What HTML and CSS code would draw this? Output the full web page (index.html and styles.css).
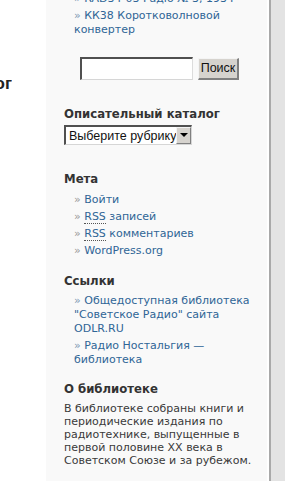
FILE: index.html
```html
<!DOCTYPE html>
<html lang="ru">
<head>
  <meta charset="UTF-8" />
  <title>Библиотека</title>
  <meta name="viewport" content="width=device-width, initial-scale=1.0" />
  <link rel="stylesheet" href="styles.css">
</head>
<body>
  <div class="page">
    <div class="main">
      <div class="main-title">
        <h2>Описательный каталог</h2>
      </div>
    </div>

    <div class="sidebar">
      <ul class="links top-list">
        <li><a href="#">RAD34-03 Радio № 3, 1934</a></li>
        <li><a href="#">КК38 Коротковолновой конвертер</a></li>
      </ul>

      <form class="search" onsubmit="return false;">
        <input type="text" class="search-input" />
        <button type="submit" class="search-btn">Поиск</button>
      </form>

      <h3 class="catalog-title">Описательный каталог</h3>
      <div class="select-wrap">
        <select class="category">
          <option>Выберите рубрику</option>
        </select>
        <span class="select-arrow"></span>
      </div>

      <h3 class="meta-title">Мета</h3>
      <ul class="links meta">
        <li><a href="#">Войти</a></li>
        <li><a href="#"><abbr title="Really Simple Syndication">RSS</abbr> записей</a></li>
        <li><a href="#"><abbr title="Really Simple Syndication">RSS</abbr> комментариев</a></li>
        <li><a href="#">WordPress.org</a></li>
      </ul>

      <h3 class="section-title">Ссылки</h3>
      <ul class="links">
        <li><a href="#">Общедоступная библиотека "Советское Радио" сайта ODLR.RU</a></li>
        <li><a href="#">Радио Ностальгия — библиотека</a></li>
      </ul>

      <h3 class="about-title">О библиотеке</h3>
      <p class="about">В библиотеке собраны книги и периодические издания по радиотехнике, выпущенные в первой половине XX века в Советском Союзе и за рубежом.</p>
    </div>

    <div class="edge"></div>
  </div>
</body>
</html>
```

FILE: styles.css
```css
:root {
  --sidebar-bg: #f9f9f9;
  --link: #2f6596;
  --heading: #333333;
  --text: #3a3a3a;
  --bullet: #9a9a9a;
}

* {
  box-sizing: border-box;
}

html, body {
  margin: 0;
  padding: 0;
  height: 100%;
  overflow: hidden;
}

body {
  background: #ffffff;
  font-family: "DejaVu Sans", Verdana, sans-serif;
  font-size: 11px;
  color: var(--text);
}

.page {
  display: flex;
  min-height: 100vh;
}

.main {
  width: 46px;
  flex-shrink: 0;
}

.main-title {
  width: 12px;
  display: flex;
  justify-content: flex-end;
  overflow: hidden;
  padding-top: 74px;
}

.main-title h2 {
  margin: 0;
  white-space: nowrap;
  font-family: "Liberation Sans", Arial, sans-serif;
  font-size: 17px;
  line-height: 20px;
  color: #222;
}

.sidebar {
  width: 221px;
  flex-shrink: 0;
  background: var(--sidebar-bg);
  padding: 0 14px 0 18px;
}

.edge {
  flex: 1;
  background: #e3e3e3;
  border-left: 2px solid #ffffff;
  box-shadow: inset 2px 0 0 #a9a9a9;
}

/* lists */
ul.links {
  list-style: none;
  margin: 5px 0 0 0;
  padding: 0 0 0 10px;
}

ul.links li {
  line-height: 14px;
  margin-bottom: 3px;
}

ul.links li::before {
  content: "» ";
  color: #7f9ab4;
}

ul.links a {
  color: var(--link);
  text-decoration: none;
}

ul.meta {
  margin-top: 6px;
}

ul.meta li::before {
  color: var(--bullet);
}

.top-list {
  margin-top: -8px !important;
}

abbr {
  text-decoration: none;
  border-bottom: 1px dotted #555;
}

/* search */
.search {
  display: flex;
  align-items: center;
  gap: 5px;
  margin: 20px 0 0 16px;
}

.search-input {
  width: 113px;
  height: 23px;
  margin: 0;
  background: #ffffff;
  border-style: solid;
  border-width: 2px 1px 1px 2px;
  border-color: #505050 #dcdcdc #d6d6d6 #505050;
}

.search-btn {
  height: 22px;
  width: 41px;
  margin: 0;
  padding: 0;
  background: #d6d3ce;
  font-family: "Liberation Sans", Arial, sans-serif;
  font-size: 12.5px;
  color: #111;
  border-style: solid;
  border-width: 1px 2px 2px 1px;
  border-color: #f4f4f4 #808080 #808080 #f4f4f4;
}

/* headings */
h3 {
  margin: 0;
  font-family: "DejaVu Sans Condensed", "DejaVu Sans", sans-serif;
  font-stretch: condensed;
  font-size: 13px;
  line-height: 16px;
  font-weight: bold;
  color: var(--heading);
}

.catalog-title {
  margin-top: 26px;
}

.meta-title {
  margin-top: 26px;
}

.section-title {
  margin-top: 15px;
}

.about-title {
  margin-top: 14px;
}

/* select */
.select-wrap {
  position: relative;
  width: 128px;
  height: 20px;
  margin-top: 3px;
}

.category {
  appearance: none;
  -webkit-appearance: none;
  width: 100%;
  height: 20px;
  margin: 0;
  padding: 0 0 0 3px;
  background: #ffffff;
  font-family: "Liberation Sans", Arial, sans-serif;
  font-size: 12.5px;
  color: #111;
  border-style: solid;
  border-width: 2px 1px 1px 2px;
  border-color: #505050 #d6d6d6 #d6d6d6 #505050;
  border-radius: 0;
}

.select-arrow {
  position: absolute;
  top: 2px;
  right: 1px;
  width: 15px;
  height: 17px;
  background: #d6d3ce;
  border-style: solid;
  border-width: 1px;
  border-color: #f4f4f4 #808080 #808080 #f4f4f4;
}

.select-arrow::after {
  content: "";
  position: absolute;
  left: 3px;
  top: 5px;
  border-left: 4px solid transparent;
  border-right: 4px solid transparent;
  border-top: 4px solid #000;
}

/* about */
.about {
  margin: 5px 0 0 0;
  line-height: 13px;
  color: var(--text);
}
```
